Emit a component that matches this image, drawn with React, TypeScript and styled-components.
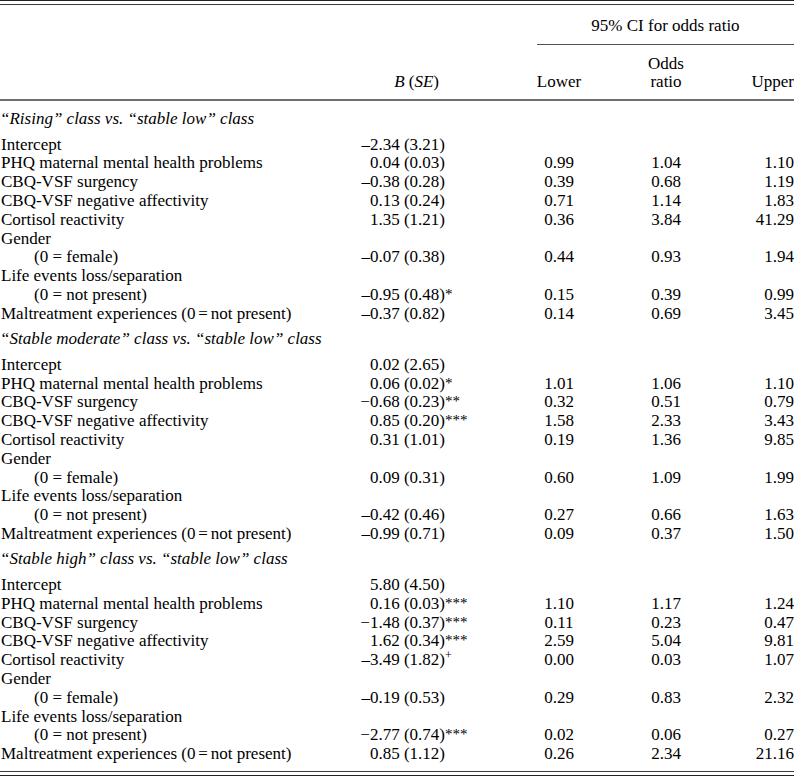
import React from "react";
import styled, { createGlobalStyle } from "styled-components";

const Global = createGlobalStyle`
  html, body { margin: 0; padding: 0; background: #fff; }
  body { font-family: "Liberation Serif", "Times New Roman", serif; color: #000; }
`;

const COLS = "350px 167px 84px 130px 63px";

const Page = styled.div`
  width: 794px;
  font-size: 17px;
  line-height: 18.75px;
`;

const DoubleRule = styled.div`
  border-top: 1px solid #222;
  border-bottom: 1px solid #3a3a3a;
  height: 3px;
`;

const HeadGrid = styled.div`
  display: grid;
  grid-template-columns: ${COLS};
  border-bottom: 2px solid #6e6e6e;
`;

const SpanHead = styled.div`
  grid-column: 3 / 6;
  margin-left: 20px;
  text-align: center;
  padding: 11.6px 0 8.65px;
  border-bottom: 1px solid #555;
`;

const HeadCell = styled.div<{ $align: "left" | "center" | "right" }>`
  align-self: end;
  text-align: ${(p) => p.$align};
  padding: 9.6px 0 6.9px;
`;

const ValueBox = styled.span<{ $pad?: number }>`
  display: inline-block;
  width: 95px;
  text-align: right;
  padding-right: ${(p) => p.$pad ?? 0}px;
  box-sizing: border-box;
`;

const Body = styled.div`
  padding: 2.4px 0 7px;
  border-bottom: 1px solid #3a3a3a;
`;

const SectionTitle = styled.div`
  font-style: italic;
  padding: 6.25px 0 7.25px;
`;

const Row = styled.div`
  display: grid;
  grid-template-columns: ${COLS};
  height: 18.8px;
  line-height: 18.8px;
  white-space: nowrap;
`;

const Label = styled.div<{ $indent?: boolean }>`
  padding-left: ${(p) => (p.$indent ? 34 : 1)}px;
`;

const Cell = styled.div<{ $align: "left" | "center" | "right" }>`
  text-align: ${(p) => p.$align};
`;

const Stars = styled.span`
  font-size: 15px;
  position: relative;
  top: -1px;
`;

const Plus = styled.span`
  font-size: 12px;
  position: relative;
  top: -6px;
`;

const BottomRule = styled.div`
  height: 3px;
  border-bottom: 1px solid #222;
`;

type R = {
  label: string;
  indent?: boolean;
  b?: string;
  sig?: string;
  lo?: string;
  or?: string;
  up?: string;
};

type Section = { title: string; rows: R[] };

const make = (v: string[][]): R[] => {
  const labels: [string, boolean?][] = [
    ["Intercept"],
    ["PHQ maternal mental health problems"],
    ["CBQ-VSF surgency"],
    ["CBQ-VSF negative affectivity"],
    ["Cortisol reactivity"],
    ["Gender"],
    ["(0 = female)", true],
    ["Life events loss/separation"],
    ["(0 = not present)", true],
    ["Maltreatment experiences (0\u2006=\u2006not present)"],
  ];
  return labels.map(([label, indent], i) => {
    const r = v[i] || [];
    return { label, indent, b: r[0], sig: r[1], lo: r[2], or: r[3], up: r[4] };
  });
};

const sections: Section[] = [
  {
    title: "\u201cRising\u201d class vs. \u201cstable low\u201d class",
    rows: make([
      ["\u20132.34 (3.21)"],
      ["0.04 (0.03)", "", "0.99", "1.04", "1.10"],
      ["\u20130.38 (0.28)", "", "0.39", "0.68", "1.19"],
      ["0.13 (0.24)", "", "0.71", "1.14", "1.83"],
      ["1.35 (1.21)", "", "0.36", "3.84", "41.29"],
      [],
      ["\u20130.07 (0.38)", "", "0.44", "0.93", "1.94"],
      [],
      ["\u20130.95 (0.48)", "*", "0.15", "0.39", "0.99"],
      ["\u20130.37 (0.82)", "", "0.14", "0.69", "3.45"],
    ]),
  },
  {
    title: "\u201cStable moderate\u201d class vs. \u201cstable low\u201d class",
    rows: make([
      ["0.02 (2.65)"],
      ["0.06 (0.02)", "*", "1.01", "1.06", "1.10"],
      ["\u22120.68 (0.23)", "**", "0.32", "0.51", "0.79"],
      ["0.85 (0.20)", "***", "1.58", "2.33", "3.43"],
      ["0.31 (1.01)", "", "0.19", "1.36", "9.85"],
      [],
      ["0.09 (0.31)", "", "0.60", "1.09", "1.99"],
      [],
      ["\u20130.42 (0.46)", "", "0.27", "0.66", "1.63"],
      ["\u20130.99 (0.71)", "", "0.09", "0.37", "1.50"],
    ]),
  },
  {
    title: "\u201cStable high\u201d class vs. \u201cstable low\u201d class",
    rows: make([
      ["5.80 (4.50)"],
      ["0.16 (0.03)", "***", "1.10", "1.17", "1.24"],
      ["\u22121.48 (0.37)", "***", "0.11", "0.23", "0.47"],
      ["1.62 (0.34)", "***", "2.59", "5.04", "9.81"],
      ["\u20133.49 (1.82)", "+", "0.00", "0.03", "1.07"],
      [],
      ["\u20130.19 (0.53)", "", "0.29", "0.83", "2.32"],
      [],
      ["\u22122.77 (0.74)", "***", "0.02", "0.06", "0.27"],
      ["0.85 (1.12)", "", "0.26", "2.34", "21.16"],
    ]),
  },
];

const Sig: React.FC<{ s?: string }> = ({ s }) => {
  if (!s) return null;
  if (s === "+") return <Plus>+</Plus>;
  return <Stars>{s}</Stars>;
};

export default function App() {
  return (
    <Page>
      <Global />
      <DoubleRule />
      <HeadGrid>
        <SpanHead>95% CI for odds ratio</SpanHead>
        <HeadCell $align="left" />
        <HeadCell $align="left">
          <ValueBox $pad={6}>
            <i>B</i> (<i>SE</i>)
          </ValueBox>
        </HeadCell>
        <HeadCell $align="center">Lower</HeadCell>
        <HeadCell $align="center">
          Odds
          <br />
          ratio
        </HeadCell>
        <HeadCell $align="right">Upper</HeadCell>
      </HeadGrid>
      <Body>
        {sections.map((sec) => (
          <React.Fragment key={sec.title}>
            <SectionTitle>{sec.title}</SectionTitle>
            {sec.rows.map((r, i) => (
              <Row key={i}>
                <Label $indent={r.indent}>{r.label}</Label>
                <Cell $align="left">
                  {r.b && <ValueBox>{r.b}</ValueBox>}
                  <Sig s={r.sig} />
                </Cell>
                <Cell $align="center">{r.lo}</Cell>
                <Cell $align="center">{r.or}</Cell>
                <Cell $align="right">{r.up}</Cell>
              </Row>
            ))}
          </React.Fragment>
        ))}
      </Body>
      <BottomRule />
    </Page>
  );
}
